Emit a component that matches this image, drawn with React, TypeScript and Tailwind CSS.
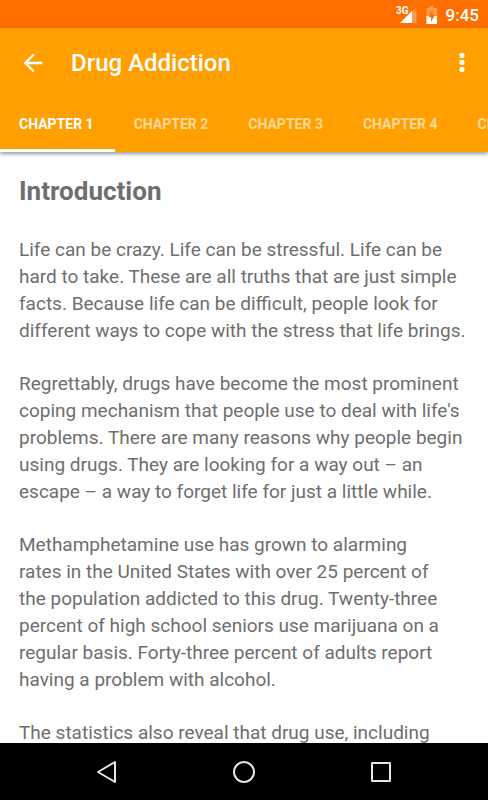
import { useState } from 'react'

const chapters = ['Chapter 1', 'Chapter 2', 'Chapter 3', 'Chapter 4', 'Chapter 5']

const paragraphs = [
  'Life can be crazy. Life can be stressful. Life can be hard to take. These are all truths that are just simple facts. Because life can be difficult, people look for different ways to cope with the stress that life brings.',
  "Regrettably, drugs have become the most prominent coping mechanism that people use to deal with life's problems. There are many reasons why people begin using drugs. They are looking for a way out – an escape – a way to forget life for just a little while.",
  'Methamphetamine use has grown to alarming\nrates in the United States with over 25 percent of\nthe population addicted to this drug. Twenty-three percent of high school seniors use marijuana on a regular basis. Forty-three percent of adults report having a problem with alcohol.',
  'The statistics also reveal that drug use, including',
]

function StatusBar() {
  return (
    <div className="flex h-7 shrink-0 items-center justify-end bg-[#ff6f00] pt-0.5 pr-[9px] text-white">
      <svg className="h-5 w-[22px]" viewBox="0 0 22 20" aria-hidden="true">
        <path d="M20.5 2v16H4z" fill="#fff" fillOpacity="0.3" />
        <path d="M16 6v12H4z" fill="#fff" />
        <text x="0" y="9" fontSize="10" fontWeight="700" fill="#fff" stroke="#ff6f00" strokeWidth="1.5" paintOrder="stroke">3G</text>
      </svg>
      <svg className="ml-2 h-5 w-3" viewBox="0 0 12 20" aria-hidden="true">
        <path d="M3.5 1h4v2H11v8H.5V3h3z" fill="#fff" fillOpacity="0.3" />
        <path d="M.5 11H11v8H.5z" fill="#fff" />
        <path d="M6.5 4.500 2.500 12H5v5l4-7H6.500z" fill="#ff6f00" />
      </svg>
      <span className="ml-2 text-[17px] leading-6 font-medium">9:45</span>
    </div>
  )
}

function Toolbar() {
  return (
    <div className="flex h-[70px] items-center px-5 text-white">
      <button type="button" aria-label="Back" className="-ml-[5px] p-1">
        <svg className="h-7 w-7" viewBox="0 0 24 24" fill="currentColor">
          <path d="M20 11H7.83l5.59-5.59L12 4l-8 8 8 8 1.41-1.41L7.83 13H20v-2z" />
        </svg>
      </button>
      <h1 className="ml-5 flex-1 text-2xl font-medium">Drug Addiction</h1>
      <button type="button" aria-label="More options" className="-mr-2">
        <svg className="h-7 w-7" viewBox="0 0 24 24" fill="currentColor">
          <circle cx="12" cy="5.5" r="2.2" />
          <circle cx="12" cy="11.5" r="2.2" />
          <circle cx="12" cy="17.5" r="2.2" />
        </svg>
      </button>
    </div>
  )
}

export default function App() {
  const [active, setActive] = useState(0)

  return (
    <div className="flex h-screen flex-col overflow-hidden bg-white font-[Roboto,sans-serif]">
      <StatusBar />
      <header className="z-10 shrink-0 bg-[#ffa000] shadow-[0_2px_4px_rgba(0,0,0,0.4)]">
        <Toolbar />
        <nav role="tablist" className="flex overflow-hidden">
          {chapters.map((chapter, i) => (
            <button
              key={chapter}
              type="button"
              role="tab"
              aria-selected={i === active}
              onClick={() => setActive(i)}
              className={`h-[54px] shrink-0 border-b-3 pr-[21px] pl-[19px] text-sm font-bold uppercase ${
                i === active ? 'border-white text-white' : 'border-transparent text-white/60'
              }`}
            >
              {chapter}
            </button>
          ))}
        </nav>
      </header>
      <main className="flex min-h-0 flex-1 flex-col gap-[26px] overflow-hidden px-[19px] pt-5 text-[#6e6e6e]">
        <h2 className="shrink-0 text-[26px] leading-[38px] font-bold">Introduction</h2>
        {paragraphs.map((text) => (
          <p key={text} className="shrink-0 text-[19px] leading-[27px] whitespace-pre-line">{text}</p>
        ))}
      </main>
      <footer className="flex h-[57px] shrink-0 items-center justify-around bg-black px-[38px] text-[#e6e6e6]">
        <button type="button" aria-label="Back">
          <svg className="h-7 w-7" viewBox="0 0 28 28" fill="none" stroke="currentColor" strokeWidth="2" strokeLinejoin="round">
            <path d="M22 4v20L5 14z" />
          </svg>
        </button>
        <button type="button" aria-label="Home">
          <svg className="h-7 w-7" viewBox="0 0 28 28" fill="none" stroke="currentColor" strokeWidth="2">
            <circle cx="14" cy="14" r="10" />
          </svg>
        </button>
        <button type="button" aria-label="Recent apps">
          <svg className="h-7 w-7" viewBox="0 0 28 28" fill="none" stroke="currentColor" strokeWidth="2" strokeLinejoin="round">
            <path d="M5 5h18v18H5z" />
          </svg>
        </button>
      </footer>
    </div>
  )
}
